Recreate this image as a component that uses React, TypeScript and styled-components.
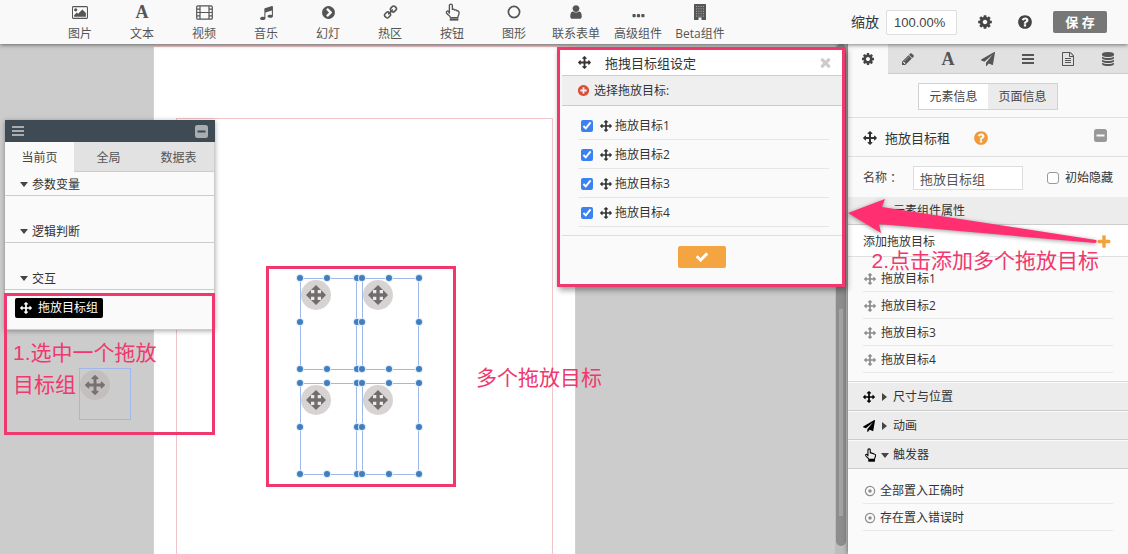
import React from "react";
import styled, { createGlobalStyle, css } from "styled-components";

const PINK = "#f0386e";

const GlobalStyle = createGlobalStyle`
  *, *::before, *::after { box-sizing: border-box; }
  html, body { margin: 0; padding: 0; }
  body {
    font-family: "Open Sans", "Noto Sans CJK SC", sans-serif;
    font-size: 12px;
    line-height: 18px;
    color: #333;
    background: #ccc;
    overflow: hidden;
  }
  button, input { font: inherit; color: inherit; margin: 0; }
  ul { list-style: none; margin: 0; padding: 0; }
  h2, h3, p { margin: 0; font-weight: 400; font-size: inherit; }
`;

/* ---------- icons ---------- */

const DISC =
  "q0 209-103 385.500t-279.500 279.500-385.500 103-385.500-103-279.500-279.500-103-385.500 103-385.500 279.500-279.500 385.500-103 385.500 103 279.500 279.500 103 385.500z";

const PATHS = {
  arrows:
    "M1792 896q0 26-19 45l-256 256q-19 19-45 19t-45-19-19-45v-128h-384v384h128q26 0 45 19t19 45-19 45l-256 256q-19 19-45 19t-45-19l-256-256q-19-19-19-45t19-45 45-19h128v-384h-384v128q0 26-19 45t-45 19-45-19l-256-256q-19-19-19-45t19-45l256-256q19-19 45-19t45 19 19 45v128h384v-384h-128q-26 0-45-19t-19-45 19-45l256-256q19-19 45-19t45 19l256 256q19 19 19 45t-19 45-45 19h-128v384h384v-128q0-26 19-45t45-19 45 19l256 256q19 19 19 45z",
  cog: "M1152 896q0-106-75-181t-181-75-181 75-75 181 75 181 181 75 181-75 75-181zm512-109v222q0 12-8 23t-20 13l-185 28q-19 54-39 91 35 50 107 138 10 12 10 25t-9 23q-27 37-99 108t-94 71q-12 0-26-9l-138-108q-44 23-91 38-16 136-29 186-7 28-36 28h-222q-14 0-24.500-8.500t-11.500-21.500l-28-184q-49-16-90-37l-141 107q-10 9-25 9-14 0-25-11-126-114-165-168-7-10-7-23 0-12 8-23 15-21 51-66.500t54-70.500q-27-50-41-99l-183-27q-13-2-21-12.500t-8-23.500v-222q0-12 8-23t19-13l186-28q14-46 39-92-40-57-107-138-10-12-10-24 0-10 9-23 26-36 98.500-107.500t94.500-71.500q13 0 26 10l138 107q44-23 91-38 16-136 29-186 7-28 36-28h222q14 0 24.500 8.500t11.500 21.500l28 184q49 16 90 37l142-107q9-9 24-9 13 0 25 10 129 119 165 170 7 8 7 22 0 12-8 23-15 21-51 66.500t-54 70.500q26 50 41 98l183 28q13 2 21 12.500t8 23.500z",
  question:
    "M1024 1376v-192q0-14-9-23t-23-9h-192q-14 0-23 9t-9 23v192q0 14 9 23t23 9h192q14 0 23-9t9-23zm256-672q0-88-55.500-163t-138.500-116-170-41q-243 0-371 213-15 24 8 42l132 100q7 6 19 6 16 0 25-12 53-68 86-92 34-24 86-24 48 0 85.500 26t37.500 59q0 38-20 61t-68 45q-63 28-115.500 86.500t-52.500 125.500v36q0 14 9 23t23 9h192q14 0 23-9t9-23q0-19 21.500-49.500t54.500-49.500q32-18 49-28.500t46-35 44.500-48 28-60.500 12.500-81zm384 192" +
    DISC,
  chevron:
    "M845 1395l454-454q19-19 19-45t-19-45l-454-454q-19-19-45-19t-45 19l-102 102q-19 19-19 45t19 45l307 307-307 307q-19 19-19 45t19 45l102 102q19 19 45 19t45-19zm819-499" +
    DISC,
  plusCircle:
    "M1344 960v-128q0-26-19-45t-45-19h-256v-256q0-26-19-45t-45-19h-128q-26 0-45 19t-19 45v256h-256q-26 0-45 19t-19 45v128q0 26 19 45t45 19h256v256q0 26 19 45t45 19h128q26 0 45-19t19-45v-256h256q26 0 45-19t19-45zm320-64" +
    DISC,
  times:
    "M1490 1322q0 40-28 68l-136 136q-28 28-68 28t-68-28l-294-294-294 294q-28 28-68 28t-68-28l-136-136q-28-28-28-68t28-68l294-294-294-294q-28-28-28-68t28-68l136-136q28-28 68-28t68 28l294 294 294-294q28-28 68-28t68 28l136 136q28 28 28 68t-28 68l-294 294 294 294q28 28 28 68z",
  check:
    "M1671 566q0 40-28 68l-724 724-136 136q-28 28-68 28t-68-28l-136-136-362-362q-28-28-28-68t28-68l136-136q28-28 68-28t68 28l294 295 656-657q28-28 68-28t68 28l136 136q28 28 28 68z",
  plus: "M1600 736v192q0 40-28 68t-68 28h-416v416q0 40-28 68t-68 28h-192q-40 0-68-28t-28-68v-416h-416q-40 0-68-28t-28-68v-192q0-40 28-68t68-28h416v-416q0-40 28-68t68-28h192q40 0 68 28t28 68v416h416q40 0 68 28t28 68z",
  pencil:
    "M491 1536l91-91-235-235-91 91v107h128v128h107zm523-928q0-22-22-22-10 0-17 7l-542 542q-7 7-7 17 0 22 22 22 10 0 17-7l542-542q7-7 7-17zm-54-192l416 416-832 832h-416v-416zm683 96q0 53-37 90l-166 166-416-416 166-165q36-38 90-38 53 0 91 38l235 234q37 39 37 91z",
  plane:
    "M1764 11q33 24 27 64l-256 1536q-5 29-32 45-14 8-31 8-11 0-24-5l-453-185-242 295q-18 23-49 23-13 0-22-4-19-7-30.500-23.500t-11.500-36.500v-349l864-1059-1069 925-395-162q-37-14-40-55-2-40 32-59l1664-960q15-9 32-9 20 0 36 11z",
  music:
    "M1664 224v1120q0 50-34 89t-86 60.500-103.500 32-96.500 10.500-96.500-10.500-103.500-32-86-60.500-34-89 34-89 86-60.500 103.500-32 96.500-10.500q105 0 192 39v-537l-768 237v709q0 50-34 89t-86 60.500-103.500 32-96.500 10.500-96.500-10.500-103.500-32-86-60.500-34-89 34-89 86-60.500 103.500-32 96.500-10.500q105 0 192 39v-967q0-31 19-56.500t49-35.500l832-256q12-4 28-4 40 0 68 28t28 68z",
  link: "M1520 1216q0-40-28-68l-208-208q-28-28-68-28-42 0-72 32 3 3 19 18.500t21.500 21.500 15 19 13 25.500 3.500 27.500q0 40-28 68t-68 28q-15 0-27.500-3.500t-25.500-13-19-15-21.500-21.500-18.500-19q-33 31-33 73 0 40 28 68l206 207q27 27 68 27 40 0 68-26l147-146q28-28 28-67zm-703-705q0-40-28-68l-206-207q-28-28-68-28-39 0-68 27l-147 146q-28 28-28 67 0 40 28 68l208 208q27 27 68 27 42 0 72-31-3-3-19-18.500t-21.500-21.500-15-19-13-25.500-3.500-27.500q0-40 28-68t68-28q15 0 27.500 3.500t25.500 13 19 15 21.500 21.500 18.500 19q33-31 33-73zm895 705q0 120-85 203l-147 146q-83 83-203 83-121 0-204-85l-206-207q-83-83-83-203 0-123 88-209l-88-88q-86 88-208 88-120 0-204-84l-208-208q-84-84-84-204t85-203l147-146q83-83 203-83 121 0 204 85l206 207q83 83 83 203 0 123-88 209l88 88q86-88 208-88 120 0 204 84l208 208q84 84 84 204z",
  user: "M1536 1399q0 109-62.500 187t-150.500 78h-854q-88 0-150.500-78t-62.500-187q0-85 8.500-160.500t31.500-152 58.500-131 94-89 134.500-34.500q131 128 313 128t313-128q76 0 134.500 34.500t94 89 58.500 131 31.500 152 8.500 160.500zm-256-887q0 159-112.500 271.500t-271.500 112.500-271.500-112.500-112.500-271.500 112.500-271.500 271.500-112.500 271.500 112.500 112.500 271.500z",
  file: "M1596 380q28 28 48 76t20 88v1152q0 40-28 68t-68 28h-1344q-40 0-68-28t-28-68v-1600q0-40 28-68t68-28h896q40 0 88 20t76 48zm-444-244v376h376q-10-29-22-41l-313-313q-12-12-41-22zm384 1528v-1024h-416q-40 0-68-28t-28-68v-416h-768v1536h1280zm-1024-864q0-14 9-23t23-9h704q14 0 23 9t9 23v64q0 14-9 23t-23 9h-704q-14 0-23-9t-9-23v-64zm736 224q14 0 23 9t9 23v64q0 14-9 23t-23 9h-704q-14 0-23-9t-9-23v-64q0-14 9-23t23-9h704zm0 256q14 0 23 9t9 23v64q0 14-9 23t-23 9h-704q-14 0-23-9t-9-23v-64q0-14 9-23t23-9h704z",
  database:
    "M896 768q237 0 443-43t325-127v170q0 69-103 128t-280 93.500-385 34.500-385-34.500-280-93.500-103-128v-170q119 84 325 127t443 43zm0 768q237 0 443-43t325-127v170q0 69-103 128t-280 93.500-385 34.500-385-34.500-280-93.500-103-128v-170q119 84 325 127t443 43zm0-384q237 0 443-43t325-127v170q0 69-103 128t-280 93.500-385 34.500-385-34.500-280-93.500-103-128v-170q119 84 325 127t443 43zm0-1152q208 0 385 34.500t280 93.500 103 128v128q0 69-103 128t-280 93.500-385 34.500-385-34.500-280-93.500-103-128v-128q0-69 103-128t280-93.500 385-34.500z",
};

const Svg = styled.svg`
  display: block;
  flex: none;
`;

function Icon({ name, size = 14, color = "currentColor" }: { name: keyof typeof PATHS; size?: number; color?: string }) {
  return (
    <Svg width={size} height={size} viewBox="0 0 1792 1792" fill={color} aria-hidden="true">
      <path d={PATHS[name]} />
    </Svg>
  );
}

const LinkIcon = () => (
  <Svg width="15" height="15" viewBox="0 0 1792 1792" fill="currentColor" aria-hidden="true">
    <path d={PATHS.link} transform="translate(1792 0) scale(-1 1)" />
  </Svg>
);

const PictureIcon = () => (
  <Svg width="17" height="15" viewBox="0 0 1984 1792" fill="currentColor" aria-hidden="true">
    <path
      transform="translate(32 0)"
      d="M576 576q0 80-56 136t-136 56-136-56-56-136 56-136 136-56 136 56 56 136zm1024 384v448h-1408v-192l320-320 160 160 512-512zm96-704h-1600q-13 0-22.500 9.500t-9.500 22.500v1216q0 13 9.500 22.500t22.500 9.500h1600q13 0 22.500-9.500t9.500-22.500v-1216q0-13-9.500-22.500t-22.500-9.500zm160 32v1216q0 66-47 113t-113 47h-1600q-66 0-113-47t-47-113v-1216q0-66 47-113t113-47h1600q66 0 113 47t47 113z"
    />
  </Svg>
);

const FilmIcon = () => (
  <Svg width="17" height="15" viewBox="0 0 17 15" fill="none" stroke="currentColor" aria-hidden="true">
    <rect x="0.7" y="0.8" width="15.6" height="13.4" rx="1.3" strokeWidth="1.2" />
    <path d="M4 1v13M13 1v13M4 7.500h9" strokeWidth="1.200" />
    <path d="M1 4.100h3M1 7.500h3M1 10.900h3M13 4.100h3M13 7.500h3M13 10.900h3" strokeWidth="1.100" />
  </Svg>
);

const HandIcon = ({ size = 18 }: { size?: number }) => (
  <Svg width={size} height={size} viewBox="0 0 24 24" fill="none" stroke="currentColor" strokeWidth="1.8" strokeLinejoin="round" aria-hidden="true">
    <path d="M8.500 13.500V3.500a2 2 0 0 1 4 0V8.500q2.200-.8 3 .9q2.200-.7 3 .9q3-.2 3 2.700c0 3-1.700 3.500-1.700 6.500H10c0-2.500-5.500-4.500-5.500-7c0-2 2-2.200 2.800-1.300z" />
    <path d="M9 22h11.500" strokeWidth="3" />
  </Svg>
);

const RingIcon = () => (
  <Svg width="14" height="14" viewBox="0 0 14 14" aria-hidden="true">
    <circle cx="7" cy="7" r="5.600" fill="none" stroke="currentColor" strokeWidth="1.700" />
  </Svg>
);

const DotsIcon = () => (
  <Svg width="13" height="14" viewBox="0 0 13 14" fill="currentColor" aria-hidden="true">
    <rect x="0.500" y="9" width="3.200" height="3.200" rx="0.800" />
    <rect x="4.900" y="9" width="3.200" height="3.200" rx="0.800" />
    <rect x="9.300" y="9" width="3.200" height="3.200" rx="0.800" />
  </Svg>
);

const BuildingIcon = () => (
  <Svg width="12" height="16" viewBox="0 0 12 16" aria-hidden="true">
    <path d="M.5 0h11q.5 0 .5.500v15q0 .5-.5.500H7.500v-2.500h-3V16H.5q-.5 0-.5-.500V.5Q0 0 .5 0z" fill="currentColor" />
    {[2, 4.4, 6.8, 9.2, 11.6].map((y) => (
      <path key={y} d={`M2 ${y + 0.5}h1.100M4.300 ${y + 0.5}h1.100M6.600 ${y + 0.5}h1.100M8.900 ${y + 0.5}h1.100`} stroke="#aaa" strokeWidth="1" />
    ))}
  </Svg>
);

const BarsIcon = () => (
  <Svg width="12" height="12" viewBox="0 0 12 12" fill="currentColor" aria-hidden="true">
    <path d="M0 1h12v2H0zM0 5h12v2H0zM0 9h12v2H0z" />
  </Svg>
);

const MinusIcon = ({ bar }: { bar: string }) => (
  <Svg width="13" height="13" viewBox="0 0 13 13" aria-hidden="true">
    <rect width="13" height="13" rx="2.500" fill="currentColor" />
    <rect x="2.500" y="5.500" width="8" height="2" fill={bar} />
  </Svg>
);

const TargetDot = () => (
  <Svg width="12" height="12" viewBox="0 0 12 12" aria-hidden="true">
    <circle cx="6" cy="6" r="4.600" fill="none" stroke="#8c8c8c" strokeWidth="1.200" />
    <circle cx="6" cy="6" r="1.700" fill="#8c8c8c" />
  </Svg>
);

const DiamondArrows = () => (
  <Svg width="20" height="20" viewBox="0 0 20 20" aria-hidden="true">
    <path d="M10 0l10 10-10 10L0 10z" fill="#6f6d6d" />
    <path d="M5 5h3.300v3.300H5zM11.700 5H15v3.300h-3.300zM5 11.700h3.300V15H5zM11.700 11.700H15V15h-3.300z" fill="#eceaea" />
  </Svg>
);

const LetterIcon = styled.span`
  font: 700 18px/18px "Liberation Serif", serif;
`;

const Caret = styled.span<{ $open?: boolean }>`
  flex: none;
  width: 0;
  height: 0;
  border: 4px solid transparent;
  ${(p) =>
    p.$open
      ? css`border-top-color: #444; border-top-width: 5px; border-bottom-width: 0;`
      : css`border-left-color: #444; border-left-width: 5px; border-right-width: 0; margin: 0 2px 0 1px;`}
`;

/* ---------- top bar ---------- */

const App = styled.div`
  position: relative;
  display: flex;
  flex-direction: column;
  height: 100vh;
  overflow: hidden;
`;

const TopBar = styled.header`
  position: relative;
  z-index: 3;
  flex: none;
  display: flex;
  justify-content: space-between;
  height: 44px;
  padding: 0 21px 0 49px;
  background: #f9f9f9;
  box-shadow: 0 1px 4px rgba(0, 0, 0, 0.5);
`;

const Tools = styled.nav`
  display: flex;
`;

const Tool = styled.button`
  display: flex;
  flex-direction: column;
  align-items: center;
  gap: 4px;
  width: 62px;
  padding: 3px 0 0;
  border: 0;
  background: none;
  color: #555;
  white-space: nowrap;
`;

const ToolIcon = styled.span`
  display: flex;
  align-items: center;
  justify-content: center;
  height: 18px;
`;

const TopActions = styled.div`
  display: flex;
  align-items: center;
`;

const ZoomLabel = styled.label`
  display: flex;
  align-items: center;
  gap: 7px;
  font-size: 14px;
  color: #333;
`;

const ZoomInput = styled.input`
  width: 71px;
  height: 25px;
  padding: 0 7px;
  border: 1px solid #ddd;
  border-radius: 2px;
  background: #fff;
  font: 13px "Liberation Sans", sans-serif;
  color: #444;
`;

const IconButton = styled.button<{ $w?: number; $color?: string }>`
  display: flex;
  align-items: center;
  justify-content: center;
  width: ${(p) => p.$w ?? 40}px;
  padding: 0;
  border: 0;
  background: none;
  color: ${(p) => p.$color ?? "#444"};
`;

const SaveButton = styled.button`
  width: 54px;
  height: 22px;
  margin-left: 16px;
  padding: 0;
  border: 0;
  border-radius: 2px;
  background: #777;
  color: #fff;
  font-size: 13px;
  line-height: 22px;
  font-weight: 700;
`;

/* ---------- work area ---------- */

const Work = styled.div`
  flex: 1;
  display: flex;
  min-height: 0;
`;

const Canvas = styled.main`
  position: relative;
  flex: 1;
  display: flex;
  min-width: 0;
  padding: 2px 0 0 153px;
  background: #ccc;
`;

const Sheet = styled.div`
  width: 423px;
  padding: 71px 22px 0;
  border: 1px solid #f0c4ca;
  border-bottom: 0;
  background: #fff;
`;

const SafeArea = styled.div`
  height: 100%;
  border: 1px solid #f0c4ca;
  border-bottom: 0;
`;

const ScrollTrack = styled.div`
  position: absolute;
  top: 0;
  right: 0;
  bottom: 0;
  width: 13px;
  padding: 0 2px 8px 1px;
  background: #bdbdbd;
`;

const ScrollThumb = styled.div`
  height: 100%;
  padding: 265px 3px 30px;
  border-radius: 5px;
  background: #8d8d8d;
`;

const ScrollGroove = styled.div`
  height: 100%;
  background: #a3a3a3;
`;

const Target = styled.div<{ $x: number; $y: number; $w: number; $h: number }>`
  position: absolute;
  left: ${(p) => p.$x}px;
  top: ${(p) => p.$y}px;
  width: ${(p) => p.$w}px;
  height: ${(p) => p.$h}px;
  padding-top: 1px;
  border: 1px solid #9fb8ea;
`;

const Badge = styled.span`
  display: flex;
  align-items: center;
  justify-content: center;
  width: 30px;
  height: 30px;
  border-radius: 50%;
  background: rgba(190, 182, 182, 0.6);
`;

const Handle = styled.i<{ $x: number; $y: number }>`
  position: absolute;
  left: ${(p) => p.$x}px;
  top: ${(p) => p.$y}px;
  width: 6px;
  height: 6px;
  margin: -4px 0 0 -4px;
  border-radius: 50%;
  background: #3f7fc0;
  box-shadow: 0 0 0 1px #dce8f6;
`;

/* ---------- floating object panel ---------- */

const ObjectPanel = styled.section`
  position: absolute;
  z-index: 2;
  left: 5px;
  top: 120px;
  width: 210px;
  background: #fafafa;
  border-right: 1px solid #ccc;
  border-bottom: 1px solid #ccc;
  box-shadow: 0 1px 5px rgba(0, 0, 0, 0.35);
`;

const ObjectPanelHead = styled.div`
  display: flex;
  align-items: center;
  justify-content: space-between;
  height: 22px;
  margin-right: -1px;
  padding: 0 7px;
  background: #3e4a54;
  color: #a9adb0;
`;

const PanelTabs = styled.div`
  display: grid;
  grid-template-columns: 69px 69px 1fr;
`;

const PanelTab = styled.button<{ $active?: boolean }>`
  height: 30px;
  padding: 2px 0 0;
  border: 0;
  border-bottom: 1px solid ${(p) => (p.$active ? "#fafafa" : "#ccc")};
  background: ${(p) => (p.$active ? "#fafafa" : "#e2e2e2")};
  color: ${(p) => (p.$active ? "#444" : "#555")};
`;

const Group = styled.div`
  height: 47px;
`;

const GroupHead = styled.h3`
  display: flex;
  align-items: center;
  gap: 4px;
  height: 24px;
  padding: 2px 0 0 15px;
  border-bottom: 1px solid #ccc;
`;

const ChipArea = styled.div`
  padding: 8px 10px 11px;
`;

const Chip = styled.button`
  display: flex;
  align-items: center;
  gap: 6px;
  height: 20px;
  padding: 0 5px;
  border: 0;
  border-radius: 2px;
  background: #000;
  color: #fff;
`;

/* ---------- inspector ---------- */

const Inspector = styled.aside`
  position: relative;
  z-index: 1;
  flex: none;
  width: 280px;
  background: #fafafa;
  box-shadow: 0 0 5px rgba(0, 0, 0, 0.5);
`;

const InspectorTabs = styled.div`
  display: flex;
`;

const InspectorTab = styled.button<{ $active?: boolean }>`
  flex: 1;
  display: flex;
  align-items: center;
  justify-content: center;
  height: 30px;
  padding: 0;
  border: 0;
  border-bottom: 1px solid ${(p) => (p.$active ? "#fafafa" : "#ccc")};
  background: ${(p) => (p.$active ? "#fafafa" : "#e1e1e1")};
  color: #555;
`;

const Row = styled.div<{ $h: number; $white?: boolean; $line?: boolean }>`
  display: flex;
  align-items: center;
  height: ${(p) => p.$h}px;
  padding: 2px 15px 0;
  background: ${(p) => (p.$white ? "#fff" : "transparent")};
  border-bottom: ${(p) => (p.$line ? "1px solid #e0e0e0" : "0")};
`;

const Segments = styled.div`
  display: flex;
  margin: 0 auto;
  border: 1px solid #d2d2d2;
`;

const Segment = styled.button<{ $active?: boolean }>`
  width: 69px;
  height: 25px;
  padding: 0;
  border: 0;
  background: ${(p) => (p.$active ? "#fff" : "#ebebeb")};
  color: #444;
`;

const Title = styled.h2`
  margin: 0 23px 0 8px;
  font-size: 13px;
`;

const Spacer = styled.span`
  flex: 1;
`;

const Collapse = styled(IconButton)`
  align-self: flex-start;
  width: 13px;
  margin: 9px 6px 0 0;
  color: #999;
`;

const NameLabel = styled.label`
  display: flex;
  align-items: center;
  color: #444;
`;

const Colon = styled.span`
  margin-right: 14px;
  font-family: "Noto Sans CJK TC", sans-serif;
`;

const NameInput = styled.input`
  width: 110px;
  height: 24px;
  padding: 0 6px;
  border: 1px solid #ddd;
  background: #fff;
  font-size: 13px;
  color: #555;
`;

const CheckLabel = styled.label`
  display: flex;
  align-items: center;
  gap: 6px;
`;

const EmptyCheck = styled.input`
  appearance: none;
  width: 12px;
  height: 12px;
  border: 1px solid #999;
  border-radius: 3px;
  background: #fff;
`;

const SectionBar = styled.button<{ $gap?: boolean }>`
  display: flex;
  align-items: center;
  width: 100%;
  height: 28px;
  margin-top: ${(p) => (p.$gap ? 1 : 0)}px;
  padding: 1px 15px 0;
  gap: 4px;
  border: 0;
  border-bottom: 1px solid #ccc;
  background: #ececec;
`;

const SectionIcon = styled.span`
  display: flex;
  width: 14px;
  color: #000;
`;

const List = styled.ul<{ $line?: boolean }>`
  padding: 8px 15px;
  border-bottom: ${(p) => (p.$line ? "1px solid #d8d8d8" : "0")};
`;

const ListItem = styled.li<{ $gap: number }>`
  display: flex;
  align-items: center;
  gap: ${(p) => p.$gap}px;
  height: 27px;
  padding: 2px 0 0 1px;
  border-bottom: 1px solid #e8e8e8;
`;

/* ---------- dialog ---------- */

const Dialog = styled.section`
  position: absolute;
  z-index: 4;
  right: 283px;
  top: 47px;
  width: 288px;
  height: 240px;
  padding-left: 2px;
  border: 3px solid ${PINK};
  background: #fafafa;
  box-shadow: 2px 3px 6px rgba(0, 0, 0, 0.4);
`;

const DialogTitle = styled.div`
  display: flex;
  align-items: center;
  height: 26px;
  padding: 0 10px 0 16px;
  border-bottom: 1px solid #ccc;
  background: #fff;
`;

const DialogName = styled.h2`
  margin-left: 14px;
  font-size: 13px;
`;

const DialogSub = styled.div`
  display: flex;
  align-items: center;
  gap: 4px;
  height: 30px;
  padding: 0 15px;
  border-bottom: 1px solid #ccc;
  background: #efefef;
`;

const DialogList = styled.ul`
  padding: 5px 13px 8px 16px;
  border-bottom: 1px solid #ddd;
`;

const DialogItem = styled.li`
  height: 29px;
  border-bottom: 1px solid #e6e6e6;
`;

const TargetLabel = styled.label`
  display: flex;
  align-items: center;
  height: 28px;
  padding: 2px 0 0 3px;
`;

const TargetCheck = styled.input`
  width: 12px;
  height: 12px;
  accent-color: #3b82f0;
`;

const TargetName = styled.span`
  display: flex;
  align-items: center;
  gap: 3px;
  margin-left: 7px;
`;

const ConfirmButton = styled.button`
  display: flex;
  align-items: center;
  justify-content: center;
  width: 48px;
  height: 22px;
  margin: 10px auto 0;
  padding: 0;
  border: 0;
  border-radius: 2px;
  background: #f5a442;
  color: #fff;
`;

/* ---------- tutorial notes ---------- */

const Frame = styled.div<{ $x: number; $y: number; $w: number; $h: number }>`
  position: absolute;
  z-index: 5;
  left: ${(p) => p.$x}px;
  top: ${(p) => p.$y}px;
  width: ${(p) => p.$w}px;
  height: ${(p) => p.$h}px;
  border: 3px solid ${PINK};
  pointer-events: none;
`;

const Note = styled.p<{ $x?: number; $right?: number; $y: number; $w?: number }>`
  position: absolute;
  z-index: 6;
  ${(p) => (p.$right !== undefined ? `right: ${p.$right}px;` : `left: ${p.$x}px;`)}
  top: ${(p) => p.$y}px;
  ${(p) => (p.$w ? `width: ${p.$w}px;` : "white-space: nowrap;")}
  font: 21px/32px "Liberation Sans", "Noto Sans CJK SC", sans-serif;
  color: ${PINK};
`;

const Arrow = styled.svg`
  position: absolute;
  z-index: 6;
  right: 30px;
  top: 195px;
  filter: drop-shadow(0 1px 2px rgba(0, 0, 0, 0.4));
`;

const TOOLS: [string, React.ReactNode][] = [
  ["图片", <PictureIcon />],
  ["文本", <LetterIcon>A</LetterIcon>],
  ["视频", <FilmIcon />],
  ["音乐", <Icon name="music" size={15} />],
  ["幻灯", <Icon name="chevron" size={15} />],
  ["热区", <LinkIcon />],
  ["按钮", <HandIcon />],
  ["图形", <RingIcon />],
  ["联系表单", <Icon name="user" size={16} />],
  ["高级组件", <DotsIcon />],
  ["Beta组件", <BuildingIcon />],
];

const TARGETS = ["拖放目标1", "拖放目标2", "拖放目标3", "拖放目标4"];

const TARGET_SPOTS = [
  [300, 234],
  [362, 234],
  [300, 339],
  [362, 339],
];

const HANDLES = [
  [0, 0], [27, 0], [57, 0],
  [0, 44], [57, 44],
  [0, 91], [27, 91], [57, 91],
];

export default function Editor() {
  return (
    <App>
      <GlobalStyle />
      <TopBar>
        <Tools aria-label="组件">
          {TOOLS.map(([label, icon]) => (
            <Tool key={label}>
              <ToolIcon>{icon}</ToolIcon>
              {label}
            </Tool>
          ))}
        </Tools>
        <TopActions>
          <ZoomLabel>
            缩放
            <ZoomInput defaultValue="100.00%" />
          </ZoomLabel>
          <IconButton $w={56} aria-label="设置"><Icon name="cog" size={16} /></IconButton>
          <IconButton $w={24} aria-label="帮助"><Icon name="question" size={16} /></IconButton>
          <SaveButton>保 存</SaveButton>
        </TopActions>
      </TopBar>

      <Work>
        <Canvas>
          <Sheet>
            <SafeArea />
          </Sheet>
          <Target $x={79} $y={324} $w={52} $h={52}>
            <Badge><Icon name="arrows" size={20} color="#757272" /></Badge>
          </Target>
          {TARGET_SPOTS.map(([x, y]) => (
            <Target key={`${x}-${y}`} $x={x} $y={y} $w={57} $h={92}>
              <Badge><DiamondArrows /></Badge>
              {HANDLES.map(([hx, hy]) => (
                <Handle key={`${hx}-${hy}`} $x={hx} $y={hy} />
              ))}
            </Target>
          ))}
          <ScrollTrack>
            <ScrollThumb>
              <ScrollGroove />
            </ScrollThumb>
          </ScrollTrack>
        </Canvas>

        <Inspector>
          <InspectorTabs>
            <InspectorTab $active aria-label="属性"><Icon name="cog" size={14} color="#444" /></InspectorTab>
            <InspectorTab aria-label="样式"><Icon name="pencil" size={14} /></InspectorTab>
            <InspectorTab aria-label="文字"><LetterIcon>A</LetterIcon></InspectorTab>
            <InspectorTab aria-label="动画"><Icon name="plane" size={14} /></InspectorTab>
            <InspectorTab aria-label="列表"><BarsIcon /></InspectorTab>
            <InspectorTab aria-label="页面"><Icon name="file" size={14} /></InspectorTab>
            <InspectorTab aria-label="数据"><Icon name="database" size={14} /></InspectorTab>
          </InspectorTabs>
          <Row $h={44} $line>
            <Segments>
              <Segment $active>元素信息</Segment>
              <Segment>页面信息</Segment>
            </Segments>
          </Row>
          <Row $h={39} $line>
            <Icon name="arrows" size={14} />
            <Title>拖放目标租</Title>
            <Icon name="question" size={16} color="#f2993a" />
            <Spacer />
            <Collapse aria-label="折叠"><MinusIcon bar="#fafafa" /></Collapse>
          </Row>
          <Row $h={40}>
            <NameLabel>
              名称<Colon>：</Colon>
              <NameInput defaultValue="拖放目标组" />
            </NameLabel>
            <Spacer />
            <CheckLabel>
              <EmptyCheck type="checkbox" />
              初始隐藏
            </CheckLabel>
          </Row>
          <SectionBar>
            <SectionIcon><Icon name="cog" size={13} /></SectionIcon>
            <Caret $open />
            元素组件属性
          </SectionBar>
          <Row $h={32} $white $line>
            添加拖放目标
            <Spacer />
            <IconButton $w={18} $color="#f2a33c" aria-label="添加"><Icon name="plus" size={16} /></IconButton>
          </Row>
          <List $line>
            {TARGETS.map((name) => (
              <ListItem key={name} $gap={5}>
                <Icon name="arrows" size={12} color="#8a8a8a" />
                {name}
              </ListItem>
            ))}
          </List>
          <SectionBar $gap>
            <SectionIcon><Icon name="arrows" size={12} /></SectionIcon>
            <Caret />
            尺寸与位置
          </SectionBar>
          <SectionBar $gap>
            <SectionIcon><Icon name="plane" size={12} /></SectionIcon>
            <Caret />
            动画
          </SectionBar>
          <SectionBar $gap>
            <SectionIcon><HandIcon size={14} /></SectionIcon>
            <Caret $open />
            触发器
          </SectionBar>
          <List>
            {["全部置入正确时", "存在置入错误时"].map((name) => (
              <ListItem key={name} $gap={4}>
                <TargetDot />
                {name}
              </ListItem>
            ))}
          </List>
        </Inspector>
      </Work>

      <ObjectPanel>
        <ObjectPanelHead>
          <BarsIcon />
          <MinusIcon bar="#3e4a54" />
        </ObjectPanelHead>
        <PanelTabs>
          <PanelTab $active>当前页</PanelTab>
          <PanelTab>全局</PanelTab>
          <PanelTab>数据表</PanelTab>
        </PanelTabs>
        <Group><GroupHead><Caret $open />参数变量</GroupHead></Group>
        <Group><GroupHead><Caret $open />逻辑判断</GroupHead></Group>
        <GroupHead><Caret $open />交互</GroupHead>
        <ChipArea>
          <Chip>
            <Icon name="arrows" size={12} />
            拖放目标组
          </Chip>
        </ChipArea>
      </ObjectPanel>

      <Dialog role="dialog" aria-label="拖拽目标组设定">
        <DialogTitle>
          <Icon name="arrows" size={13} />
          <DialogName>拖拽目标组设定</DialogName>
          <Spacer />
          <IconButton $w={13} $color="#ccc" aria-label="关闭"><Icon name="times" size={15} /></IconButton>
        </DialogTitle>
        <DialogSub>
          <Icon name="plusCircle" size={13} color="#dd4b39" />
          选择拖放目标:
        </DialogSub>
        <DialogList>
          {TARGETS.map((name) => (
            <DialogItem key={name}>
              <TargetLabel>
                <TargetCheck type="checkbox" defaultChecked />
                <TargetName>
                  <Icon name="arrows" size={12} />
                  {name}
                </TargetName>
              </TargetLabel>
            </DialogItem>
          ))}
        </DialogList>
        <ConfirmButton aria-label="确定"><Icon name="check" size={14} /></ConfirmButton>
      </Dialog>

      <Frame $x={4} $y={293} $w={211} $h={142} />
      <Frame $x={266} $y={266} $w={190} $h={221} />
      <Note $x={13} $y={337} $w={148}>1.选中一个拖放目标组</Note>
      <Note $x={476} $y={362}>多个拖放目标</Note>
      <Note $right={29} $y={245}>2.点击添加多个拖放目标</Note>
      <Arrow width="250" height="54" viewBox="0 0 250 54" aria-hidden="true">
        <path d="M0 18L37 4L34 12L248 45Q250 47 247 48L31 29L33 38Z" fill="#ff2f72" />
      </Arrow>
    </App>
  );
}
